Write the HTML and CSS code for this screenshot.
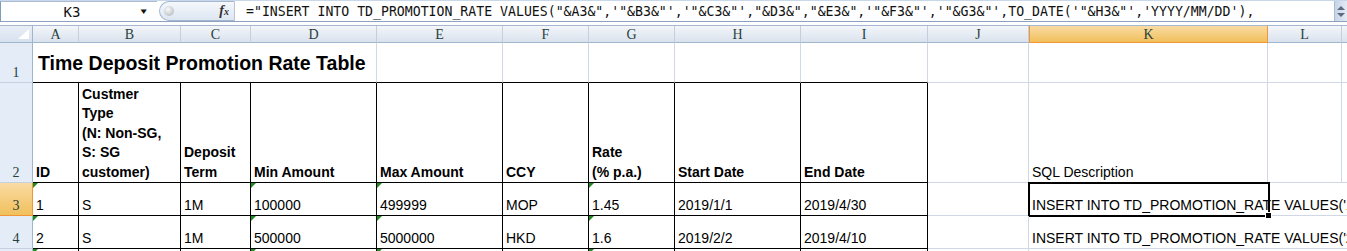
FILE: index.html
```html
<!DOCTYPE html>
<html lang="en">
<head>
    <meta charset="UTF-8">
    <title>TD Promotion Rate</title>
    <link rel="stylesheet" href="styles.css">
</head>
<body>
    <div class="formula-bar">
        <div class="name-box">
            <span class="cell-ref">K3</span>
            <span class="drop">&#9660;</span>
        </div>
        <div class="fx-box">
            <span class="knob"></span>
            <span class="fx">f<small>x</small></span>
        </div>
        <div class="formula">="INSERT INTO TD_PROMOTION_RATE VALUES("&amp;A3&amp;",'"&amp;B3&amp;"','"&amp;C3&amp;"',"&amp;D3&amp;","&amp;E3&amp;",'"&amp;F3&amp;"','"&amp;G3&amp;"',TO_DATE('"&amp;H3&amp;"','YYYY/MM/DD'),</div>
        <div class="scroll">
            <span class="arr up"></span>
            <span class="arr down"></span>
        </div>
    </div>
    <div class="strip"></div>

    <div class="sheet">
        <!-- column headers -->
        <div class="corner"></div>
        <div class="ch">A</div>
        <div class="ch">B</div>
        <div class="ch">C</div>
        <div class="ch">D</div>
        <div class="ch">E</div>
        <div class="ch">F</div>
        <div class="ch">G</div>
        <div class="ch">H</div>
        <div class="ch">I</div>
        <div class="ch">J</div>
        <div class="ch active">K</div>
        <div class="ch">L</div>
        <div class="ch"></div>

        <!-- row 1 -->
        <div class="rh">1</div>
        <div class="c title tt span4">Time Deposit Promotion Rate Table</div>
        <div class="c tt"></div>
        <div class="c tt"></div>
        <div class="c tt"></div>
        <div class="c tt"></div>
        <div class="c tt"></div>
        <div class="c"></div>
        <div class="c"></div>
        <div class="c"></div>
        <div class="c"></div>

        <!-- row 2 -->
        <div class="rh">2</div>
        <div class="c tb hd">ID</div>
        <div class="c tb hd wrap"><span>Custmer<br>Type<br>(N: Non-SG,<br>S: SG<br>customer)</span></div>
        <div class="c tb hd wrap"><span>Deposit<br>Term</span></div>
        <div class="c tb hd">Min Amount</div>
        <div class="c tb hd">Max Amount</div>
        <div class="c tb hd">CCY</div>
        <div class="c tb hd wrap"><span>Rate<br>(% p.a.)</span></div>
        <div class="c tb hd">Start Date</div>
        <div class="c tb hd">End Date</div>
        <div class="c"></div>
        <div class="c">SQL Description</div>
        <div class="c"></div>
        <div class="c"></div>

        <!-- row 3 -->
        <div class="rh active">3</div>
        <div class="c tb tn">1</div>
        <div class="c tb">S</div>
        <div class="c tb">1M</div>
        <div class="c tb tn">100000</div>
        <div class="c tb tn">499999</div>
        <div class="c tb">MOP</div>
        <div class="c tb tn">1.45</div>
        <div class="c tb">2019/1/1</div>
        <div class="c tb">2019/4/30</div>
        <div class="c"></div>
        <div class="c span3 selected">INSERT INTO TD_PROMOTION_RATE VALUES('1','S','1M',100000,499999,'MOP','1.45',TO_DATE('2019/1/1','YYYY/MM/DD'),</div>

        <!-- row 4 -->
        <div class="rh">4</div>
        <div class="c tb tn">2</div>
        <div class="c tb">S</div>
        <div class="c tb">1M</div>
        <div class="c tb tn">500000</div>
        <div class="c tb tn">5000000</div>
        <div class="c tb">HKD</div>
        <div class="c tb tn">1.6</div>
        <div class="c tb">2019/2/2</div>
        <div class="c tb">2019/4/10</div>
        <div class="c"></div>
        <div class="c span3">INSERT INTO TD_PROMOTION_RATE VALUES('2','S','1M',500000,5000000,'HKD','1.6',TO_DATE('2019/2/2','YYYY/MM/DD'),</div>

        <!-- row 5 (only its top edge is in view) -->
        <div class="rh"></div>
        <div class="c tb tn"></div>
        <div class="c tb"></div>
        <div class="c tb"></div>
        <div class="c tb tn"></div>
        <div class="c tb tn"></div>
        <div class="c tb"></div>
        <div class="c tb tn"></div>
        <div class="c tb"></div>
        <div class="c tb"></div>
        <div class="c"></div>
        <div class="c span3"></div>
    </div>
</body>
</html>
```

FILE: styles.css
```css
body {
    margin: 0;
    width: 1347px;
    height: 251px;
    overflow: hidden;
    background-color: #fff;
    font-family: "Liberation Sans", Arial, sans-serif;
    color: #000;
}

/* formula bar */
.formula-bar {
    display: flex;
    height: 22px;
    box-sizing: border-box;
    border-top: 1px solid #c9d7ea;
    border-bottom: 1px solid #8da2bf;
    background-color: #fff;
}
.name-box {
    width: 157px;
    display: flex;
    align-items: center;
    border-left: 1px solid #7f9db9;
    border-top: 1px solid #a9bcd4;
    box-sizing: border-box;
}
.cell-ref {
    flex: 1;
    text-align: center;
    padding-left: 2px;
    font-family: "DejaVu Sans Mono", monospace;
    font-size: 14px;
    color: #111;
}
.drop {
    width: 16px;
    font-size: 8px;
    color: #111;
    transform: scaleX(1.3);
}
.fx-box {
    width: 76px;
    margin-left: 2px;
    height: 20px;
    box-sizing: border-box;
    display: flex;
    align-items: center;
    justify-content: space-between;
    padding: 0 5px 0 4px;
    border: 1px solid #a3b7d1;
    border-right: 1px solid #b6c5d8;
    border-radius: 10px 0 0 10px;
    background: linear-gradient(#f5f8fc, #dde6f1);
}
.knob {
    width: 10px;
    height: 10px;
    border-radius: 50%;
    background: radial-gradient(circle at 40% 35%, #fafafa, #a9afb7);
}
.fx {
    font-family: "Liberation Serif", serif;
    font-style: italic;
    font-weight: bold;
    font-size: 14px;
    color: #333;
}
.fx small {
    font-size: 10px;
}
.formula {
    flex: 1;
    padding: 2px 0 0 11px;
    font-family: "DejaVu Sans Mono", monospace;
    font-size: 13.2px;
    line-height: 18px;
    white-space: nowrap;
    overflow: hidden;
    color: #111;
}
.scroll {
    width: 12px;
    display: flex;
    flex-direction: column;
    align-items: center;
    justify-content: center;
    gap: 3px;
    background: linear-gradient(90deg, #c6d5e8, #e3ebf5);
    border-left: 1px solid #a9bcd4;
}
.arr {
    width: 0;
    height: 0;
    border-left: 4px solid transparent;
    border-right: 4px solid transparent;
}
.arr.up {
    border-bottom: 4px solid #5c6b80;
}
.arr.down {
    border-top: 4px solid #5c6b80;
}
.strip {
    height: 3px;
    background-color: #fff;
    border-bottom: 1px solid #a5b8d0;
}

/* sheet grid */
.sheet {
    display: grid;
    grid-template-columns: 33px 46px 102px 70px 126px 126px 86px 86px 126px 127px 101px 239px 74px 60px;
    grid-template-rows: 17px 40px 100px 33px 33px 33px;
}
.corner {
    background: linear-gradient(#e9eff7, #d7e1ee);
    border-right: 1px solid #9eb6ce;
    border-bottom: 1px solid #9eb6ce;
    position: relative;
}
.corner::after {
    content: "";
    position: absolute;
    right: 3px;
    bottom: 3px;
    border-left: 11px solid transparent;
    border-bottom: 10px solid #fff;
}
.ch {
    box-sizing: border-box;
    background: linear-gradient(#f3f6fa, #dae2ed);
    border-right: 1px solid #c3cfdd;
    border-bottom: 1px solid #9eb6ce;
    text-align: center;
    font-family: "Liberation Serif", serif;
    font-size: 14px;
    line-height: 17px;
    color: #27413e;
}
.ch.active {
    background: linear-gradient(#f9dba3, #f1c05c);
    border-right: 1px solid #f29536;
    border-bottom: 1px solid #f29536;
    border-left: 1px solid #f29536;
}
.rh {
    box-sizing: border-box;
    background-color: #e4ecf7;
    border-right: 1px solid #9eb6ce;
    border-bottom: 1px solid #c5d1e0;
    display: flex;
    align-items: flex-end;
    justify-content: center;
    font-family: "Liberation Serif", serif;
    font-size: 14px;
    line-height: 17px;
    padding-bottom: 1px;
    color: #27413e;
}
.rh.active {
    background: linear-gradient(#f9dba3, #f1c05c);
    border-right: 1px solid #f29536;
    border-bottom: 1px solid #f29536;
}

.c {
    box-sizing: border-box;
    position: relative;
    border-right: 1px solid #d0d7e5;
    border-bottom: 1px solid #d0d7e5;
    display: flex;
    align-items: flex-end;
    padding: 0 2px 1px 3px;
    font-size: 14px;
    line-height: 17px;
    white-space: nowrap;
}
.span4 {
    grid-column: span 4;
}
.span3 {
    grid-column: span 3;
    border-right: none;
}
.title {
    align-items: center;
    padding: 2px 0 0 5px;
    font-size: 19.5px;
    font-weight: bold;
}
.tt {
    border-bottom: 1px solid #000;
}
.tb {
    border-right: 1px solid #000;
    border-bottom: 1px solid #000;
}
.hd {
    font-weight: bold;
}
.wrap {
    line-height: 19.5px;
    padding-bottom: 0;
}

/* number stored as text marker */
.tn::before {
    content: "";
    position: absolute;
    left: 0;
    top: 0;
    border-top: 5px solid #1f8a1f;
    border-right: 5px solid transparent;
}

/* active cell */
.selected::after {
    content: "";
    position: absolute;
    left: -1px;
    top: -1px;
    width: 242px;
    height: 35px;
    box-sizing: border-box;
    border: 2px solid #000;
}
.selected::before {
    content: "";
    position: absolute;
    left: 236px;
    top: 29px;
    width: 5px;
    height: 5px;
    background-color: #000;
    border: 1px solid #fff;
    z-index: 1;
}
```
